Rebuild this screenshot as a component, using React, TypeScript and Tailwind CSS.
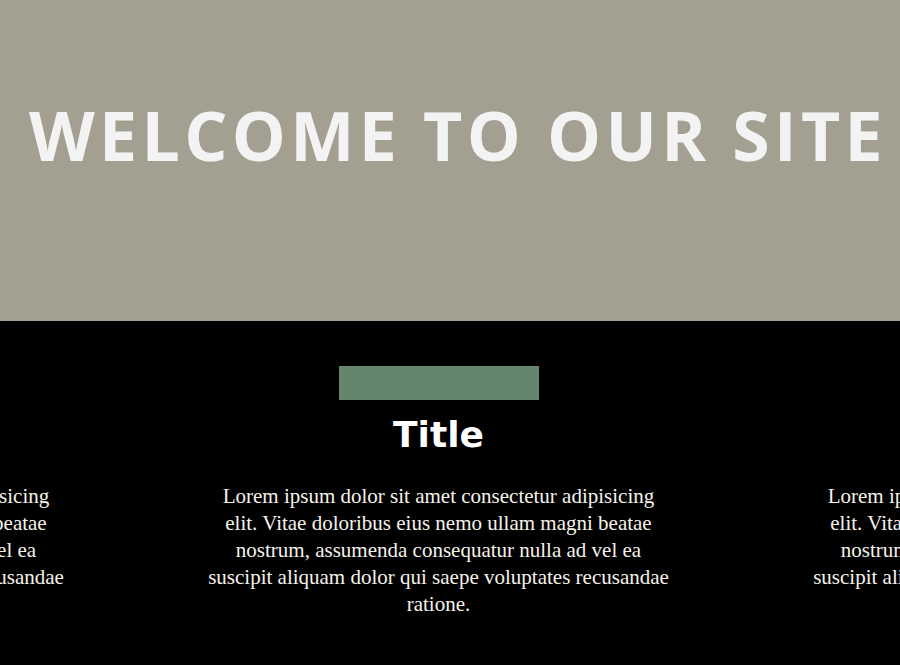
const slides = [0, 1, 2];

function Slide() {
  return (
    <div className="w-[605px] shrink-0 flex flex-col items-center pt-[45px]">
      <div className="w-[200px] h-[34px] bg-[#66856d]" />
      <h2 className="mt-[13px] text-[36px] leading-[44px] font-bold text-white font-['DejaVu_Sans',sans-serif]">
        Title
      </h2>
      <p className="mt-[26px] text-center text-[21px] leading-[27px] text-[#f6f2ea] whitespace-nowrap font-['Liberation_Serif',serif]">
        Lorem ipsum dolor sit amet consectetur adipisicing
        <br />
        elit. Vitae doloribus eius nemo ullam magni beatae
        <br />
        nostrum, assumenda consequatur nulla ad vel ea
        <br />
        suscipit aliquam dolor qui saepe voluptates recusandae
        <br />
        ratione.
      </p>
    </div>
  );
}

export default function App() {
  return (
    <div className="w-[900px] h-[665px] overflow-hidden bg-black">
      <header className="h-[321px] bg-[#a39f91] pt-[101px] pl-[16px] flex justify-center">
        <h1 className="text-[68px] leading-none font-bold tracking-[4.3px] text-[#f3f3f3] whitespace-nowrap font-['Open_Sans',sans-serif]">
          WELCOME TO OUR SITE
        </h1>
      </header>
      <section className="overflow-hidden">
        <div className="flex ml-[-469px]">
          {slides.map((s) => (
            <Slide key={s} />
          ))}
        </div>
      </section>
    </div>
  );
}
